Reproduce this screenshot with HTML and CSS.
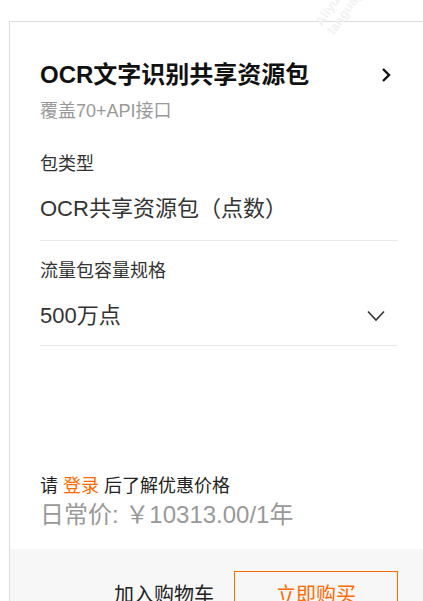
FILE: index.html
```html
<!DOCTYPE html>
<html lang="zh-CN">
<head>
    <meta charset="UTF-8">
    <meta name="viewport" content="width=device-width, initial-scale=1.0">
    <title>OCR文字识别共享资源包</title>
    <link rel="stylesheet" href="styles.css">
</head>
<body>
    <div class="watermark">
        <span>Aliyun</span>
        <span>language</span>
    </div>
    <div class="card">
        <div class="card-body">
            <div class="product-head">
                <h1 class="product-title">OCR文字识别共享资源包</h1>
                <svg class="icon-right" width="14" height="16" viewBox="0 0 14 16">
                    <polyline points="4,2 10,8 4,14" fill="none" stroke="#111" stroke-width="2.4"/>
                </svg>
            </div>
            <p class="product-desc">覆盖70+API接口</p>

            <div class="field field-first">
                <div class="field-label">包类型</div>
                <div class="field-value">OCR共享资源包（点数）</div>
            </div>
            <div class="field">
                <div class="field-label">流量包容量规格</div>
                <div class="field-value field-select">
                    <span>500万点</span>
                    <svg class="icon-down" width="20" height="12" viewBox="0 0 20 12">
                        <polyline points="2,1.5 10,10 18,1.5" fill="none" stroke="#333" stroke-width="1.6"/>
                    </svg>
                </div>
            </div>

            <div class="price-box">
                <p class="login-tip">请 <a href="#" class="login-link">登录</a> 后了解优惠价格</p>
                <p class="price">日常价: ￥10313.00/1年</p>
            </div>
        </div>
        <div class="card-foot">
            <button class="btn-cart">加入购物车</button>
            <button class="btn-buy">立即购买</button>
        </div>
    </div>
</body>
</html>
```

FILE: styles.css
```css
body {
    margin: 0;
    font-family: 'Liberation Sans', 'Noto Sans CJK SC', sans-serif;
    background: #fff;
    color: #333;
    overflow: hidden;
}
.watermark {
    position: absolute;
    left: 312px;
    top: -10px;
    display: flex;
    flex-direction: column;
    transform: rotate(-55deg);
    font-size: 13px;
    line-height: 15px;
    color: #f2f2f2;
    font-weight: bold;
}
.card {
    margin: 21px 0 0 9px;
    border-top: 1px solid #dcdcdc;
    border-left: 1px solid #dcdcdc;
    min-height: 600px;
}
.card-body {
    padding: 37px 25px 19px 30px;
}
.product-head {
    display: flex;
    align-items: center;
    justify-content: space-between;
}
.product-title {
    margin: 0;
    font-size: 24px;
    line-height: 32px;
    font-weight: bold;
    color: #111;
}
.icon-right {
    margin-right: 5px;
}
.product-desc {
    margin: 7px 0 0;
    font-size: 18px;
    line-height: 26px;
    color: #999;
}
.field {
    padding: 17px 0 14px;
    border-bottom: 1px solid #e8e8e8;
}
.field-first {
    margin-top: 10px;
    padding-bottom: 16px;
}
.field-label {
    font-size: 18px;
    line-height: 26px;
    color: #333;
}
.field-value {
    margin-top: 17px;
    font-size: 22px;
    line-height: 30px;
    color: #333;
}
.field-select {
    display: flex;
    align-items: center;
    justify-content: space-between;
}
.icon-down {
    margin-right: 12px;
}
.price-box {
    margin-top: 127px;
}
.login-tip {
    margin: 0;
    font-size: 18px;
    line-height: 26px;
    color: #222;
}
.login-link {
    color: #ff6a00;
    text-decoration: none;
}
.price {
    margin: 1px 0 0;
    font-size: 24px;
    line-height: 30px;
    color: #999;
}
.card-foot {
    display: flex;
    justify-content: flex-end;
    gap: 20px;
    padding: 22px 25px 20px 30px;
    background: #f7f7f7;
}
.card-foot button {
    font-family: inherit;
    font-size: 20px;
    height: 44px;
    background: transparent;
    cursor: pointer;
}
.btn-cart {
    border: none;
    padding: 0;
    color: #222;
}
.btn-buy {
    width: 164px;
    border: 1px solid #ff6a00;
    color: #ff6a00;
}
```
